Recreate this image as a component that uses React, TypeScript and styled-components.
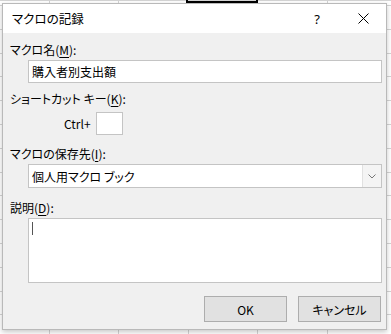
import React from 'react';
import styled, {createGlobalStyle} from 'styled-components';

const GlobalStyle = createGlobalStyle`
  html, body {
    margin: 0;
    padding: 0;
  }
  body {
    font-family: "Noto Sans CJK JP", "Noto Sans", sans-serif;
    font-feature-settings: "palt";
    color: #000;
  }
`;

const Sheet = styled.div`
  position: relative;
  width: 391px;
  height: 334px;
  box-sizing: border-box;
  padding: 3px 4px 4px 2px;
  overflow: hidden;
  background-color: #fff;
  background-image:
    linear-gradient(#d4d4d4, #d4d4d4),
    repeating-linear-gradient(to bottom, transparent 0, transparent 5px, #d4d4d4 5px, #d4d4d4 6px, transparent 6px, transparent 23.8px),
    repeating-linear-gradient(to right, transparent 0, transparent 49px, #d4d4d4 49px, #d4d4d4 50px, transparent 50px, transparent 69.5px);
  background-size: 100% 1px, 100% 100%, 100% 100%;
  background-position: 0 0, 0 0, 0 0;
  background-repeat: no-repeat, repeat, repeat;
`;

const ActiveCell = styled.div`
  position: absolute;
  left: 186px;
  top: -20px;
  width: 68px;
  height: 19px;
  border: 2px solid #000;
`;

const Dialog = styled.div`
  position: relative;
  height: 100%;
  box-sizing: border-box;
  display: flex;
  flex-direction: column;
  background: #f0f0f0;
  border: 1px solid #b9b9b9;
  box-shadow: 0 2px 5px rgba(0, 0, 0, 0.22);
`;

const TitleBar = styled.div`
  height: 29px;
  display: flex;
  align-items: center;
  background: #fff;
`;

const Title = styled.span`
  flex: 1;
  padding-left: 9px;
  font-size: 12.5px;
`;

const Help = styled.span`
  width: 14px;
  margin-right: 34px;
  font-family: "Noto Sans", sans-serif;
  font-size: 13px;
  text-align: center;
`;

const CloseButton = styled.span`
  display: flex;
  width: 11px;
  margin-right: 17px;
`;

const Body = styled.div`
  flex: 1;
  display: flex;
  flex-direction: column;
  padding: 9px 4px 7px 7px;
`;

interface LabelProps {
  readonly $gap?: number;
}

const Label = styled.div<LabelProps>`
  height: 16px;
  line-height: 16px;
  font-size: 12px;
  margin-top: ${props => props.$gap || 0}px;
  u {
    text-decoration: underline;
    text-underline-offset: 2px;
  }
`;

const Field = styled.div`
  margin: 2px 0 0 18px;
  height: 23px;
  box-sizing: border-box;
  border: 1px solid #c4c4c4;
  background: #fff;
  display: flex;
  align-items: center;
  padding-left: 3px;
  font-size: 12px;
`;

const ShortcutRow = styled.div`
  margin-top: 5px;
  display: flex;
  align-items: center;
  padding-left: 54px;
  font-size: 12px;
`;

const KeyBox = styled.div`
  width: 27px;
  height: 23px;
  box-sizing: border-box;
  margin-left: 5px;
  border: 1px solid #c4c4c4;
  background: #fff;
`;

const Select = styled.div`
  margin: 2px 0 0 18px;
  height: 24px;
  box-sizing: border-box;
  border: 1px solid #c4c4c4;
  background: #fff;
  display: flex;
  font-size: 12px;
`;

const SelectValue = styled.span`
  flex: 1;
  display: flex;
  align-items: center;
  padding-left: 3px;
`;

const SelectArrow = styled.span`
  width: 18px;
  display: flex;
  align-items: center;
  justify-content: center;
  background: #f4f4f4;
  border-left: 1px solid #e1e1e1;
`;

const TextArea = styled.div`
  margin: 2px 0 0 18px;
  height: 65px;
  box-sizing: border-box;
  border: 1px solid #c4c4c4;
  background: #fff;
  padding: 3px 0 0 3px;
`;

const Caret = styled.div`
  width: 1px;
  height: 13px;
  background: #555;
`;

const Buttons = styled.div`
  margin-top: auto;
  display: flex;
  justify-content: flex-end;
  gap: 11px;
  padding-right: 1px;
`;

const Button = styled.button`
  width: 83px;
  height: 26px;
  box-sizing: border-box;
  border: 1px solid #adadad;
  background: #e1e1e1;
  font-family: inherit;
  font-feature-settings: "palt";
  font-size: 12px;
  color: #000;
  padding: 0;
`;

export default function App() {
  return (
    <>
      <GlobalStyle />
      <Sheet>
        <ActiveCell />
        <Dialog>
          <TitleBar>
            <Title>マクロの記録</Title>
            <Help>?</Help>
            <CloseButton>
              <svg width="11" height="11" viewBox="0 0 11 11">
                <path d="M0.5 0.5 L10.5 10.5 M10.5 0.5 L0.5 10.5" stroke="#000" strokeWidth="1" fill="none" />
              </svg>
            </CloseButton>
          </TitleBar>
          <Body>
            <Label>マクロ名(<u>M</u>):</Label>
            <Field>購入者別支出額</Field>
            <Label $gap={8}>ショートカット キー(<u>K</u>):</Label>
            <ShortcutRow>
              Ctrl+
              <KeyBox />
            </ShortcutRow>
            <Label $gap={11}>マクロの保存先(<u>I</u>):</Label>
            <Select>
              <SelectValue>個人用マクロ ブック</SelectValue>
              <SelectArrow>
                <svg width="8" height="5" viewBox="0 0 8 5">
                  <path d="M0.5 0.5 L4 4 L7.5 0.5" stroke="#777" strokeWidth="1" fill="none" />
                </svg>
              </SelectArrow>
            </Select>
            <Label $gap={12}>説明(<u>D</u>):</Label>
            <TextArea>
              <Caret />
            </TextArea>
            <Buttons>
              <Button>OK</Button>
              <Button>キャンセル</Button>
            </Buttons>
          </Body>
        </Dialog>
      </Sheet>
    </>
  );
}
